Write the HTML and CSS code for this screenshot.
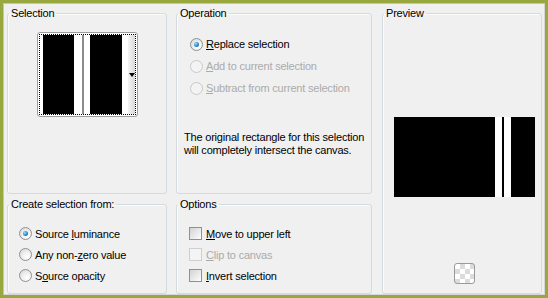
FILE: index.html
```html
<!DOCTYPE html>
<html>
<head>
<meta charset="utf-8">
<link rel="stylesheet" href="styles.css">
</head>
<body>
<div class="frame">
  <div class="dialog">
    <fieldset class="group g-selection">
      <legend>Selection</legend>
      <div class="thumb">
        <div class="thumb-inner">
          <span class="st w3"></span>
          <span class="st b31"></span>
          <span class="st w8"></span>
          <span class="st g2"></span>
          <span class="st w6"></span>
          <span class="st b32"></span>
          <span class="st w6"></span>
          <span class="st drop"><span class="tri"></span></span>
        </div>
      </div>
    </fieldset>

    <fieldset class="group g-operation">
      <legend>Operation</legend>
      <div class="list op-list">
        <div class="opt"><span class="radio checked"></span><span class="lbl"><u>R</u>eplace selection</span></div>
        <div class="opt disabled"><span class="radio"></span><span class="lbl"><u>A</u>dd to current selection</span></div>
        <div class="opt disabled"><span class="radio"></span><span class="lbl"><u>S</u>ubtract from current selection</span></div>
      </div>
      <p class="note">The original rectangle for this selection<br>will completely intersect the canvas.</p>
    </fieldset>

    <fieldset class="group g-preview">
      <legend>Preview</legend>
      <div class="preview-body">
        <div class="pv">
          <span class="pb a"></span>
          <span class="pw"></span>
          <span class="pb b"></span>
          <span class="pw"></span>
          <span class="pb c"></span>
        </div>
        <div class="checker"></div>
      </div>
    </fieldset>

    <fieldset class="group g-create">
      <legend>Create selection from:</legend>
      <div class="list cr-list">
        <div class="opt"><span class="radio checked"></span><span class="lbl">Source <u>l</u>uminance</span></div>
        <div class="opt"><span class="radio"></span><span class="lbl">Any non-<u>z</u>ero value</span></div>
        <div class="opt"><span class="radio"></span><span class="lbl">S<u>o</u>urce opacity</span></div>
      </div>
    </fieldset>

    <fieldset class="group g-options">
      <legend>Options</legend>
      <div class="list ck-list">
        <div class="opt"><span class="check"></span><span class="lbl"><u>M</u>ove to upper left</span></div>
        <div class="opt disabled"><span class="check"></span><span class="lbl"><u>C</u>lip to canvas</span></div>
        <div class="opt"><span class="check"></span><span class="lbl"><u>I</u>nvert selection</span></div>
      </div>
    </fieldset>
  </div>
</div>
</body>
</html>
```

FILE: styles.css
```css
* { box-sizing: border-box; }
html, body { margin: 0; padding: 0; }
body {
  font-family: "Liberation Sans", Arial, sans-serif;
  font-size: 11px;
  letter-spacing: -0.2px;
  color: #000;
  background: #f0f0f0;
}
.frame {
  width: 548px;
  height: 298px;
  border: 3px solid #98a83e;
  background: #f0f0f0;
  box-shadow: inset 1px 1px 0 #c4cd8c, inset -1px -1px 0 #d6d6d6;
}
.dialog {
  display: grid;
  grid-template-columns: 160px 196px 161px;
  grid-template-rows: 187px 96px;
  column-gap: 9px;
  row-gap: 4px;
  padding: 4px 3px 1px 4px;
  height: 100%;
}
.group {
  margin: 0;
  padding: 0;
  min-width: 0;
  border: 1px solid #d3dbe0;
  border-radius: 3px;
  box-shadow: inset 1px 1px 0 #fbfbfb;
}
legend {
  margin-left: 1px;
  padding: 0 2px;
  line-height: 13px;
}
.g-selection { grid-column: 1; grid-row: 1; }
.g-operation { grid-column: 2; grid-row: 1; }
.g-preview { grid-column: 3; grid-row: 1 / 3; margin-left: 1px; }
.g-create { grid-column: 1; grid-row: 2; }
.g-options { grid-column: 2; grid-row: 2; }

/* selection thumbnail */
.thumb {
  width: 101px;
  height: 85px;
  margin: 12px auto 0;
  border: 1px solid #9c9c9c;
  border-radius: 3px;
  background: #fff;
  padding: 1px;
}
.thumb-inner {
  height: 100%;
  border: 1px dotted #000;
  display: flex;
}
.st { display: block; height: 100%; }
.w3 { width: 3px; background: #fff; }
.w8 { width: 8px; background: #fff; }
.w6 { width: 6px; background: #fff; }
.g2 { width: 2px; background: #8c8c8c; }
.b31 { width: 31px; background: #000; }
.b32 { width: 32px; background: #000; }
.drop {
  flex: 1;
  background: linear-gradient(90deg, #f4f4f4, #d8d8d8);
  display: flex;
  align-items: center;
  justify-content: center;
}
.tri {
  width: 0;
  height: 0;
  border-left: 3px solid transparent;
  border-right: 3px solid transparent;
  border-top: 4px solid #000;
  margin-left: 1px;
}

/* option rows */
.list { display: flex; flex-direction: column; }
.opt {
  display: flex;
  align-items: center;
}
.op-list { margin-top: 13px; padding-left: 13px; }
.op-list .opt { height: 22px; }
.cr-list { margin-top: 12px; padding-left: 11px; }
.cr-list .opt { height: 21px; }
.ck-list { margin-top: 12px; padding-left: 12px; }
.ck-list .opt { height: 21px; }
.lbl { white-space: nowrap; }
u { text-decoration: underline; text-underline-offset: 1px; }
.disabled .lbl { color: #ababab; }

.radio {
  position: relative;
  width: 13px;
  height: 13px;
  flex: none;
  margin-right: 3px;
  border-radius: 50%;
  border: 1px solid #8f9093;
  background: radial-gradient(circle at 65% 70%, #ffffff 0, #f3f3f3 35%, #d4d4d4 100%);
}
.radio.checked::after {
  content: "";
  position: absolute;
  left: 3px;
  top: 3px;
  width: 5px;
  height: 5px;
  border-radius: 50%;
  background: radial-gradient(circle at 35% 35%, #9fdcff 0, #2a88d0 55%, #0d4f8f 100%);
}
.disabled .radio {
  border-color: #c9c9c9;
  background: #f3f3f3;
}
.check {
  width: 13px;
  height: 13px;
  flex: none;
  margin-right: 4px;
  border: 1px solid #8f9093;
  background: linear-gradient(135deg, #d2d2d2 0, #ececec 60%, #ffffff 100%);
}
.disabled .check {
  border-color: #cfcfcf;
  background: #f4f4f4;
}

.note {
  margin: 32px 0 0 7px;
  line-height: 13px;
  white-space: nowrap;
}

/* preview */
.preview-body {
  display: flex;
  flex-direction: column;
  align-items: center;
  padding-left: 5px;
}
.pv {
  display: flex;
  width: 141px;
  height: 80px;
  margin-top: 97px;
}
.pb { display: block; height: 100%; background: #000; }
.pw { display: block; height: 100%; width: 7px; background: #fff; }
.pb.a { width: 101px; }
.pb.b { width: 2px; }
.pb.c { flex: 1; }
.checker {
  width: 21px;
  height: 21px;
  margin-top: 66px;
  border: 1px solid #9a9a9a;
  border-radius: 3px;
  background-color: #fff;
  background-image:
    linear-gradient(45deg, #dcdcdc 25%, transparent 25%, transparent 75%, #dcdcdc 75%),
    linear-gradient(45deg, #dcdcdc 25%, transparent 25%, transparent 75%, #dcdcdc 75%);
  background-size: 10px 10px;
  background-position: 0 0, 5px 5px;
}
```
